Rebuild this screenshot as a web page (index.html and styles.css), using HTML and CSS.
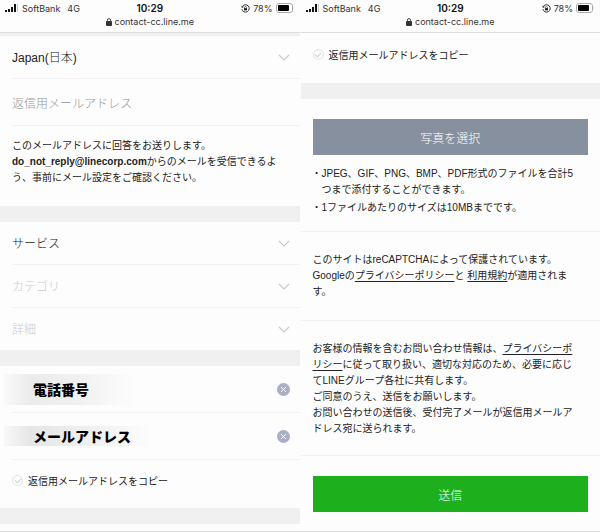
FILE: index.html
```html
<!DOCTYPE html>
<html lang="ja">

<head>
    <meta charset="UTF-8">
    <meta name="viewport" content="width=device-width, initial-scale=1.0">
    <title>お問い合わせ</title>
    <link rel="stylesheet" href="styles.css">
</head>

<body>
    <!-- shared icons -->
    <svg class="sprite" aria-hidden="true">
        <symbol id="signal" viewBox="0 0 14 9">
            <path d="M0 6h2v2H0zM3 5h2v3H3zM6 3h2v5H6zM9 0h2v8H9z" fill="#111" />
            <path d="M12 0h1v8h-1z" fill="#ccc" />
        </symbol>
        <symbol id="rotation" viewBox="0 0 9 9">
            <path d="M1.3 2.6A3.7 3.7 0 1 1 .9 5.2" fill="none" stroke="#333" />
            <path d="M.4 1.6l.5 2.4 2.1-.9z" fill="#333" />
            <path d="M3 4.1h3v2.3H3z" fill="#222" />
            <path d="M3.6 4.2V3.4a.9.9 0 0 1 1.8 0v.8" fill="none" stroke="#222" stroke-width=".6" />
        </symbol>
        <symbol id="battery" viewBox="0 0 19 10">
            <rect x=".5" y=".5" width="16" height="9" rx="2.5" fill="#fff" stroke="#aaa" />
            <rect x="2" y="2" width="11" height="6" rx="1" fill="#000" />
            <path d="M17.6 3.4q1.2 1.6 0 3.2z" fill="#aaa" />
        </symbol>
        <symbol id="lock" viewBox="0 0 6 8">
            <rect y="3" width="6" height="5" rx="1" fill="#333" />
            <path d="M1.4 3.5V2.2a1.6 1.6 0 0 1 3.2 0v1.3" fill="none" stroke="#333" stroke-width=".9" />
        </symbol>
        <symbol id="chevron" viewBox="0 0 12 8">
            <path d="M1 1l5 5 5-5" fill="none" stroke="currentColor" stroke-width="1.1" />
        </symbol>
        <symbol id="clear" viewBox="0 0 13 13">
            <circle cx="6.5" cy="6.5" r="6.5" fill="#a9b0c5" />
            <path d="M4 4l5 5M9 4l-5 5" stroke="#fff" stroke-width=".9" />
        </symbol>
    </svg>

    <div class="screens">
        <section class="screen">
            <header class="status">
                <div class="status-row">
                    <span class="carrier"><svg width="14" height="9"><use href="#signal" /></svg>SoftBank<span class="net">4G</span></span>
                    <b class="time">10:29</b>
                    <span class="power"><svg width="9" height="9"><use href="#rotation" /></svg>78%<svg width="19" height="10"><use href="#battery" /></svg></span>
                </div>
                <div class="address"><svg width="6" height="8"><use href="#lock" /></svg>contact-cc.line.me</div>
            </header>
            <div class="strip"></div>

            <div class="field">
                <select aria-label="国">
                    <option>Japan(日本)</option>
                </select>
                <svg class="chevron" width="12" height="8"><use href="#chevron" /></svg>
            </div>
            <div class="field tall">
                <input type="email" placeholder="返信用メールアドレス" aria-label="返信用メールアドレス">
            </div>
            <p class="text note">このメールアドレスに回答をお送りします。<br><b>do_not_reply@linecorp.com</b>からのメールを受信できるよ<br>う、事前にメール設定をご確認ください。</p>

            <div class="band"></div>

            <div class="field">
                <select aria-label="サービス">
                    <option>サービス</option>
                </select>
                <svg class="chevron" width="12" height="8"><use href="#chevron" /></svg>
            </div>
            <div class="field">
                <select aria-label="カテゴリ" disabled>
                    <option>カテゴリ</option>
                </select>
                <svg class="chevron" width="12" height="8"><use href="#chevron" /></svg>
            </div>
            <div class="field last">
                <select aria-label="詳細" disabled>
                    <option>詳細</option>
                </select>
                <svg class="chevron" width="12" height="8"><use href="#chevron" /></svg>
            </div>

            <div class="band"></div>

            <div class="field tall filled">
                <input class="phone" type="text" value="電話番号" aria-label="電話番号">
                <button class="clear" type="button" aria-label="消去"><svg width="13" height="13"><use href="#clear" /></svg></button>
            </div>
            <div class="field tall filled">
                <input class="mail" type="text" value="メールアドレス" aria-label="メールアドレス">
                <button class="clear" type="button" aria-label="消去"><svg width="13" height="13"><use href="#clear" /></svg></button>
            </div>
            <label class="copy"><input type="checkbox">返信用メールアドレスをコピー</label>

            <div class="band"></div>
            <div class="foot"></div>
        </section>

        <section class="screen">
            <header class="status">
                <div class="status-row">
                    <span class="carrier"><svg width="14" height="9"><use href="#signal" /></svg>SoftBank<span class="net">4G</span></span>
                    <b class="time">10:29</b>
                    <span class="power"><svg width="9" height="9"><use href="#rotation" /></svg>78%<svg width="19" height="10"><use href="#battery" /></svg></span>
                </div>
                <div class="address"><svg width="6" height="8"><use href="#lock" /></svg>contact-cc.line.me</div>
            </header>

            <label class="copy top"><input type="checkbox">返信用メールアドレスをコピー</label>

            <div class="band"></div>

            <div class="block attach">
                <button class="btn" type="button">写真を選択</button>
                <ul class="text">
                    <li>JPEG、GIF、PNG、BMP、PDF形式のファイルを合計5<br>つまで添付することができます。</li>
                    <li>1ファイルあたりのサイズは10MBまでです。</li>
                </ul>
            </div>
            <div class="block">
                <p class="text">このサイトはreCAPTCHAによって保護されています。<br>Googleの<a href="#">プライバシーポリシー</a>と <a href="#">利用規約</a>が適用されま<br>す。</p>
            </div>
            <div class="block consent">
                <p class="text">お客様の情報を含むお問い合わせ情報は、<a href="#">プライバシーポ<br>リシー</a>に従って取り扱い、適切な対応のため、必要に応じ<br>てLINEグループ各社に共有します。<br>ご同意のうえ、送信をお願いします。<br>お問い合わせの送信後、受付完了メールが返信用メールア<br>ドレス宛に送られます。</p>
            </div>
            <div class="block send">
                <button class="btn green" type="submit">送信</button>
            </div>
        </section>
    </div>
</body>

</html>
```

FILE: styles.css
```css
* {
    box-sizing: border-box;
}

body {
    margin: 0;
    background: #fdfdfd;
    color: #222;
    font-family: "Liberation Sans", "Noto Sans CJK JP", sans-serif;
    font-size: 12px;
}

.sprite {
    position: absolute;
    width: 0;
    height: 0;
}

.screens {
    display: flex;
}

.screen {
    flex: 1;
    min-width: 0;
    border-bottom: 1px solid #ddd;
}

.screen + .screen {
    padding-left: 1px;
}

/* status bar */
.status {
    height: 33px;
    border-bottom: 1px solid #ddd;
    font-family: Inter, sans-serif;
    font-size: 9px;
    color: #333;
}

.status-row {
    display: grid;
    grid-template-columns: 1fr auto 1fr;
    align-items: center;
    height: 16px;
    padding: 0 5px;
}

.carrier,
.power {
    display: flex;
    align-items: center;
    gap: 3px;
}

.net {
    margin-left: 4px;
}

.power {
    justify-content: flex-end;
}

.time {
    font-size: 10px;
    font-weight: 600;
    color: #111;
}

.address {
    display: flex;
    align-items: center;
    justify-content: center;
    gap: 3px;
    height: 11px;
}

.strip {
    height: 3px;
    background: #f0f0f0;
}

.band {
    height: 16px;
    background: #f0f0f0;
}

/* form rows */
.field {
    display: flex;
    align-items: center;
    height: 43px;
    margin-left: 12px;
    padding: 2px 10px 0 0;
    border-bottom: 1px solid #f2f2f2;
    color: #c8c8c8;
}

.field.tall {
    height: 47px;
    padding-top: 4px;
}

.field.last {
    border-bottom: none;
    height: 42px;
}

.field select,
.field input {
    flex: 1;
    min-width: 0;
    padding: 0;
    border: none;
    outline: none;
    appearance: none;
    background: none;
    color: #222;
    font-family: inherit;
    font-size: 12px;
    font-weight: 300;
}

.field select:disabled {
    color: #ccc;
    opacity: 1;
}

.field input::placeholder {
    color: #999;
}

.field.filled {
    padding-top: 0;
    justify-content: space-between;
}

.field.filled input {
    flex: none;
    margin-left: -8px;
    padding-left: 29px;
    color: #000;
    font-size: 14px;
    font-weight: 900;
}

.field .phone {
    width: 130px;
    height: 31px;
    background: linear-gradient(90deg, #fafafa, #ebebeb 20%, #f1f1f1 60%, #fdfdfd);
}

.field .mail {
    width: 146px;
    height: 20px;
    background: linear-gradient(90deg, #f8f8f8, #e6e6e6 18%, #f0f0f0 60%, #fdfdfd);
}

.clear {
    display: flex;
    padding: 0;
    border: none;
    background: none;
    cursor: pointer;
}

/* body copy */
.text {
    margin: 0;
    font-size: 10px;
    line-height: 16px;
}

.note {
    padding: 12px 12px 20px;
}

.text a {
    color: inherit;
    text-underline-offset: 2px;
}

.copy {
    display: flex;
    align-items: center;
    gap: 5px;
    height: 48px;
    padding: 0 12px 8px;
    font-size: 10px;
}

.copy.top {
    height: 50px;
}

.copy input {
    display: grid;
    place-items: center;
    width: 11px;
    height: 11px;
    margin: 0;
    appearance: none;
    border: 1px solid #e2e2e2;
    border-radius: 50%;
}

.copy input::before {
    content: "";
    width: 5px;
    height: 3px;
    border: solid #d4d4d4;
    border-width: 0 0 1px 1px;
    transform: rotate(-45deg);
}

.foot {
    height: 7px;
}

.block {
    padding: 20px 12px;
    border-bottom: 1px solid #f2f2f2;
}

.attach {
    padding-bottom: 15px;
}

.attach ul {
    margin-top: 11px;
    padding: 0 0 0 9px;
    list-style: none;
}

.attach li + li {
    margin-top: 2px;
}

.attach li::before {
    content: "・";
    float: left;
    margin-left: -10px;
}

.consent {
    padding-bottom: 18px;
}

.send {
    padding-bottom: 19px;
    border-bottom: none;
}

.btn {
    display: block;
    width: 100%;
    height: 36px;
    border: none;
    background: #87909e;
    color: #fff;
    font-family: inherit;
    font-size: 12px;
    font-weight: 300;
    cursor: pointer;
}

.green {
    background: #1eb01c;
}
```
